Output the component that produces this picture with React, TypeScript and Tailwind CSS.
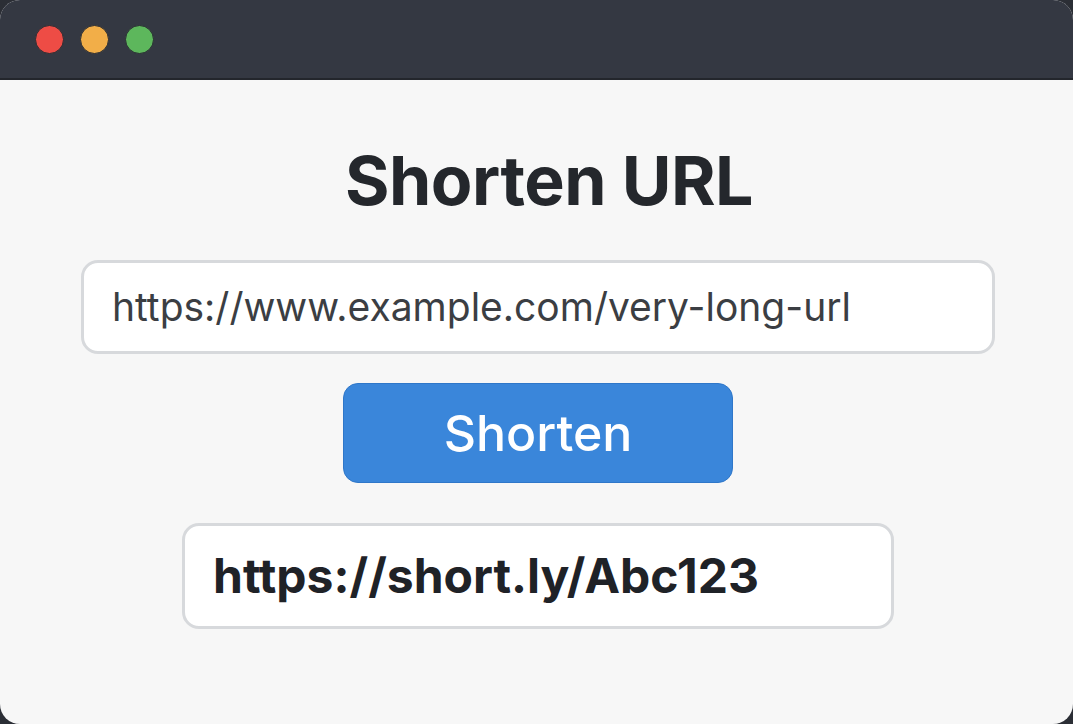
import React, { useState } from 'react';

const font = { fontFamily: 'Inter, "Noto Sans", sans-serif' };

export default function App() {
  const [url, setUrl] = useState('https://www.example.com/very-long-url');

  return (
    <div className="w-[1073px] h-[724px] bg-[#2b2e35] overflow-hidden" style={font}>
      <div className="w-full h-full flex flex-col rounded-[20px] overflow-hidden bg-[#f7f7f7]">
        {/* title bar */}
        <div className="h-[80px] shrink-0 bg-[#343842] border-b-2 border-[#23262c] flex items-center gap-[16px] pl-[35px]">
          <span className="w-[29px] h-[29px] rounded-full bg-[#ee4c45] border border-[#2a2d33]" />
          <span className="w-[29px] h-[29px] rounded-full bg-[#f2ae48] border border-[#2a2d33]" />
          <span className="w-[29px] h-[29px] rounded-full bg-[#5db75c] border border-[#2a2d33]" />
        </div>

        {/* content */}
        <div className="flex-1 flex flex-col items-center pt-[66px] pl-[3px]">
          <h1 className="ml-[22px] text-[68px] leading-none font-bold text-[#24272c] tracking-[-0.5px]">Shorten URL</h1>

          <div className="mt-[46px] w-[914px] h-[94px] bg-white border-[3px] border-[#d7d9dc] rounded-[17px] flex items-center px-[28px]">
            <input
              value={url}
              onChange={(e) => setUrl(e.target.value)}
              className="w-full bg-transparent outline-none text-[39px] text-[#3b3e43]"
              style={font}
            />
          </div>

          <button className="mt-[29px] w-[390px] h-[100px] rounded-[15px] bg-[#3a86da] border border-[#2f77c9] text-white text-[50px] font-medium">
            Shorten
          </button>

          <div className="mt-[40px] w-[712px] h-[106px] bg-white border-[3px] border-[#d7d9dc] rounded-[17px] flex items-center px-[28px]">
            <span className="text-[48px] font-bold text-[#1f2227]">https://short.ly/Abc123</span>
          </div>
        </div>
      </div>
    </div>
  );
}
